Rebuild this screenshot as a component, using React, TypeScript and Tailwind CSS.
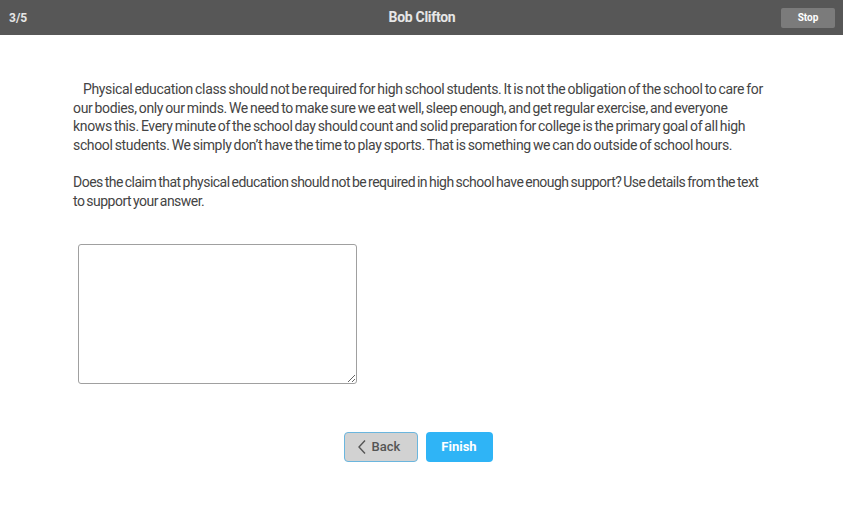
const App = () => {
  return (
    <div className="min-h-screen bg-white font-['Roboto',sans-serif] text-[#444]">
      <div className="h-[35px] bg-[#575757] flex items-center justify-between pl-[9px] pr-[8px] text-[#e6e6e6]">
        <span className="w-[60px] text-[12px] font-bold">3/5</span>
        <span className="text-[14px] font-bold tracking-[-0.3px]">Bob Clifton</span>
        <div className="w-[60px] flex justify-end">
          <button className="w-[54px] h-[20px] rounded-[2px] bg-[#7b7b7b] text-white text-[10px] font-bold">
            Stop
          </button>
        </div>
      </div>
      <div className="pl-[73px] pt-[45px]">
        <div className="w-[690px] text-[14px] leading-[18.6px] tracking-[-0.35px] [word-spacing:-1px]">
          <p className="indent-[10px]">
            Physical education class should not be required for high school students. It is not the obligation of the school to care for our bodies, only our minds. We need to make sure we eat well, sleep enough, and get regular exercise, and everyone knows this. Every minute of the school day should count and solid preparation for college is the primary goal of all high school students. We simply don’t have the time to play sports. That is something we can do outside of school hours.
          </p>
          <p className="mt-[18.6px] tracking-[-0.52px]">
            Does the claim that physical education should not be required in high school have enough support? Use details from the text to support your answer.
          </p>
        </div>
        <textarea className="block mt-[34px] ml-[5px] w-[279px] h-[140px] border border-[#a0a0a0] rounded-[3px] outline-none" />
      </div>
      <div className="flex justify-center gap-[8px] mt-[48px] pr-[7px]">
        <button className="flex items-center justify-center gap-[6px] w-[74px] h-[30px] rounded-[4px] bg-[#d2d2d2] border border-[#6bb6de] text-[#555] text-[13px] font-medium">
          <svg width="8" height="14" viewBox="0 0 8 14" className="ml-[-3px]">
            <polyline points="7,0.5 1,7 7,13.5" fill="none" stroke="#555" strokeWidth="1.4" />
          </svg>
          Back
        </button>
        <button className="w-[67px] h-[30px] rounded-[4px] bg-[#2fb4f6] text-white text-[13px] font-bold">
          Finish
        </button>
      </div>
    </div>
  );
};

export default App;
